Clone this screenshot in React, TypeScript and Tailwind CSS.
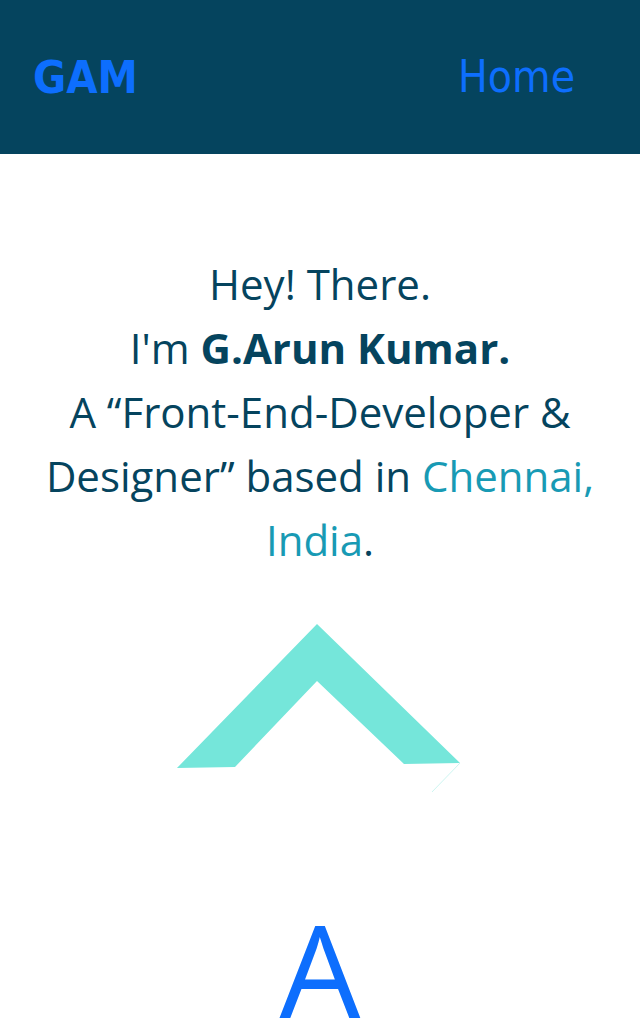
import React from "react";

function Chevron() {
  return (
    <svg width="300" height="180" viewBox="0 0 300 180" className="block">
      <polygon
        points="8,148 148,4 291,143 235,144 148,61 66,147"
        fill="#75E6DA"
      />
      <line x1="291" y1="143" x2="263" y2="172" stroke="#75E6DA" strokeWidth="0.6" opacity="0.6" />
    </svg>
  );
}

export default function App() {
  return (
    <div className="min-h-[1034px] bg-white overflow-hidden">
      {/* Header */}
      <header className="h-[154px] bg-[#05445E] flex items-center justify-between pl-[33px] pr-[65px] font-['DejaVu_Sans_Condensed','DejaVu_Sans',sans-serif]">
        <a className="text-[45px] font-bold text-[#0d6efd] leading-none">GAM</a>
        <a className="text-[44px] text-[#0d6efd] leading-none">Home</a>
      </header>

      {/* Intro */}
      <section className="pt-[98px] flex flex-col items-center font-['Open_Sans',sans-serif]">
        <p className="w-[580px] text-center text-[42px] leading-[64px] text-[#05445E]">
          Hey! There.
          <br />
          I'm <span className="font-bold">G.Arun Kumar.</span>
          <br />
          A “Front-End-Developer &amp; Designer” based in{" "}
          <span className="text-[#189AB4]">Chennai, India</span>.
        </p>

        <div className="mt-[48px] ml-[-2px]">
          <Chevron />
        </div>

        <div className="mt-[105px] text-[128px] leading-none text-[#0d6efd]">
          A
        </div>
      </section>
    </div>
  );
}
